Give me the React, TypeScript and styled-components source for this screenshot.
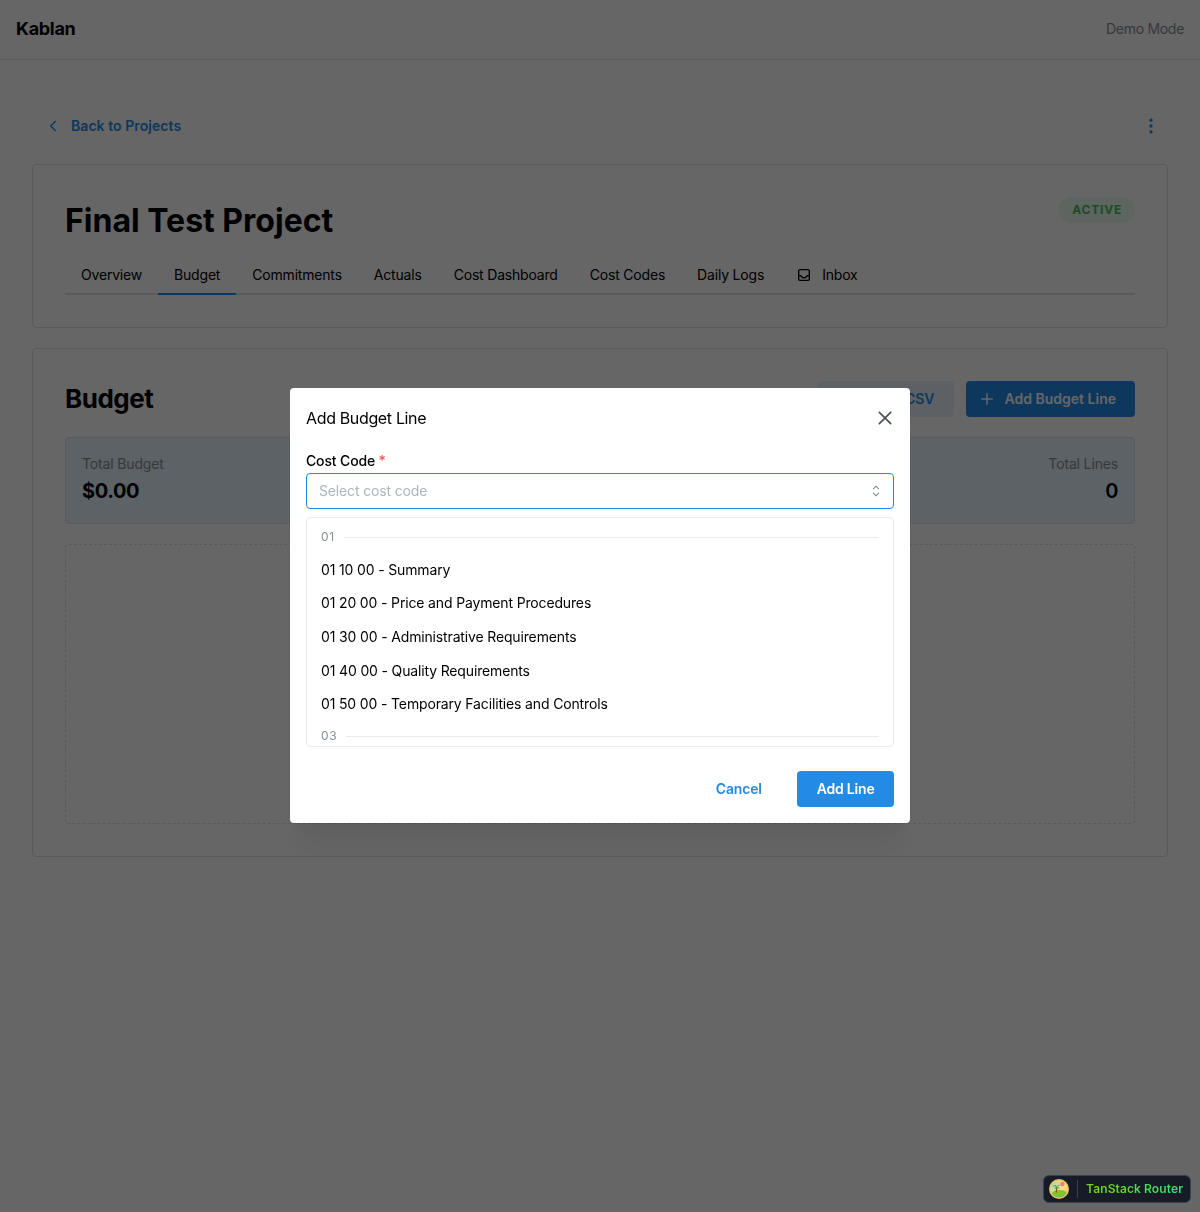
import styled, { createGlobalStyle } from "styled-components";
import { TbChevronLeft, TbDotsVertical, TbInbox, TbPlus, TbUpload } from "react-icons/tb";

const GlobalStyle = createGlobalStyle`
  * { box-sizing: border-box; }
  html, body { margin: 0; padding: 0; background: #fff; }
  body {
    font-family: Inter, "Liberation Sans", sans-serif;
    font-size: 14px;
    line-height: 1.55;
    letter-spacing: -0.15px;
    color: #000;
  }
`;

const Shell = styled.div`
  min-height: 1212px;
`;

const TopBar = styled.header`
  height: 60px;
  padding: 0 16px 1px;
  display: flex;
  align-items: center;
  justify-content: space-between;
  border-bottom: 1px solid #dee2e6;
`;

const Brand = styled.div`
  font-size: 18px;
  font-weight: 700;
  letter-spacing: -0.3px;
`;

const DemoTag = styled.div`
  color: #868e96;
  letter-spacing: -0.3px;
`;

const Main = styled.main`
  padding: 48px 32px;
  display: flex;
  flex-direction: column;
  gap: 20px;
`;

const BackRow = styled.div`
  display: flex;
  align-items: center;
  justify-content: space-between;
`;

const Button = styled.button<{ $variant: "filled" | "light" | "subtle"; $icon?: boolean }>`
  height: 36px;
  padding: 0 ${(p) => (p.$icon ? "19px 0 12px" : "19.5px")};
  display: inline-flex;
  align-items: center;
  gap: 9px;
  border: 0;
  border-radius: 4px;
  font: inherit;
  font-weight: 600;
  letter-spacing: ${(p) => (p.$icon ? "0" : "-0.2px")};
  color: ${(p) => (p.$variant === "filled" ? "#fff" : "#228be6")};
  background: ${(p) =>
    p.$variant === "filled"
      ? "#228be6"
      : p.$variant === "light"
        ? "rgba(34, 139, 230, 0.1)"
        : "transparent"};
`;

const BackButton = styled(Button)`
  letter-spacing: 0.06px;
`;

const IconButton = styled.button`
  width: 28px;
  height: 28px;
  padding: 0;
  display: inline-flex;
  align-items: center;
  justify-content: center;
  border: 0;
  background: transparent;
  color: #228be6;
  margin-right: 3px;
`;

const Card = styled.section`
  border: 1px solid #dee2e6;
  border-radius: 4px;
  padding: 32px;
`;

const TitleRow = styled.div`
  display: flex;
  align-items: flex-start;
  justify-content: space-between;
  margin-bottom: 12px;
`;

const Title = styled.h1`
  margin: 2px 0 0;
  font-size: 32px;
  font-weight: 700;
  line-height: 44px;
  letter-spacing: 0;
`;

const Badge = styled.span`
  height: 26px;
  padding: 1px 13px 0;
  display: inline-flex;
  align-items: center;
  border-radius: 13px;
  font-size: 12px;
  font-weight: 700;
  letter-spacing: 0.8px;
  color: #40c057;
  background: rgba(64, 192, 87, 0.1);
`;

const TabList = styled.nav`
  display: flex;
  border-bottom: 2px solid #dee2e6;
`;

const Tab = styled.a<{ $active?: boolean }>`
  height: 40px;
  padding: 2px 16px 0;
  margin-bottom: -2px;
  display: inline-flex;
  align-items: center;
  gap: 10px;
  letter-spacing: -0.19px;
  border-bottom: 2px solid ${(p) => (p.$active ? "#228be6" : "transparent")};
`;

const SectionHead = styled.div`
  display: flex;
  align-items: center;
  justify-content: space-between;
  margin-bottom: 20px;
`;

const SectionTitle = styled.h2`
  margin: 0;
  font-size: 26px;
  font-weight: 700;
  line-height: 36px;
  letter-spacing: -0.5px;
`;

const Actions = styled.div`
  display: flex;
  gap: 12px;
`;

const StatsBox = styled.div`
  display: flex;
  justify-content: space-between;
  padding: 15px 16px 16px;
  margin-bottom: 20px;
  border: 1px solid #dee2e6;
  border-radius: 4px;
  background: #e7f5ff;
`;

const Stat = styled.div<{ $right?: boolean }>`
  text-align: ${(p) => (p.$right ? "right" : "left")};
`;

const StatLabel = styled.div`
  color: #868e96;
`;

const StatValue = styled.div<{ $medium?: boolean }>`
  margin-top: 1px;
  font-size: 20px;
  font-weight: ${(p) => (p.$medium ? 600 : 700)};
  letter-spacing: -0.4px;
`;

const EmptyBox = styled.div`
  height: 280px;
  border: 1px dashed #dee2e6;
  border-radius: 4px;
`;

const Overlay = styled.div`
  position: fixed;
  inset: 0;
  padding-bottom: 1px;
  display: flex;
  align-items: center;
  justify-content: center;
  background: rgba(0, 0, 0, 0.6);
`;

const Modal = styled.div`
  width: 620px;
  padding: 0 16px 16px;
  border-radius: 4px;
  background: #fff;
  box-shadow: 0 1px 3px rgba(0, 0, 0, 0.05), 0 36px 28px -7px rgba(0, 0, 0, 0.05),
    0 17px 17px -7px rgba(0, 0, 0, 0.04);
`;

const ModalHead = styled.div`
  height: 60px;
  display: flex;
  align-items: center;
  justify-content: space-between;
`;

const ModalTitle = styled.div`
  font-size: 16px;
  letter-spacing: -0.35px;
`;

const CloseButton = styled.button`
  width: 28px;
  height: 28px;
  padding: 0;
  margin-right: -5px;
  display: inline-flex;
  align-items: center;
  justify-content: center;
  border: 0;
  background: transparent;
  color: #495057;
`;

const Label = styled.label`
  display: block;
  font-weight: 500;
  margin: 2.3px 0 1px;
`;

const Required = styled.span`
  color: #fa5252;
`;

const SelectInput = styled.div`
  height: 36px;
  padding: 0 8px 0 12px;
  display: flex;
  align-items: center;
  justify-content: space-between;
  border: 1px solid #228be6;
  border-radius: 4px;
  color: #adb5bd;
  svg { color: #868e96; }
`;

const Dropdown = styled.div`
  height: 230px;
  margin-top: 8px;
  padding: 4px;
  overflow: hidden;
  border: 1px solid #e9ecef;
  border-radius: 4px;
`;

const GroupLabel = styled.div`
  display: flex;
  align-items: center;
  gap: 9px;
  padding: 6px 10px;
  font-size: 12px;
  letter-spacing: 0.6px;
  color: #868e96;
  &::after {
    content: "";
    flex: 1;
    height: 1px;
    background: #e9ecef;
  }
`;

const Option = styled.div`
  padding: 6px 10px;
`;

const ModalFoot = styled.div`
  margin-top: 24px;
  display: flex;
  justify-content: flex-end;
  gap: 16px;
`;

const RouterTag = styled.div`
  position: fixed;
  right: 9px;
  bottom: 9px;
  height: 28px;
  padding: 0 7px 0 5px;
  display: flex;
  align-items: center;
  border: 1px solid #394156;
  border-radius: 6px;
  background: #161b26;
`;

const RouterLogo = styled.svg`
  width: 20px;
  height: 20px;
`;

const RouterDivider = styled.span`
  width: 1px;
  height: 18px;
  margin: 0 8px;
  background: #394156;
`;

const RouterName = styled.span`
  font-size: 12px;
  font-weight: 600;
  letter-spacing: 0.1px;
  background: linear-gradient(to right, #7ad50f, #2ee57e);
  -webkit-background-clip: text;
  background-clip: text;
  color: transparent;
`;

const tabs = ["Overview", "Budget", "Commitments", "Actuals", "Cost Dashboard", "Cost Codes", "Daily Logs"];

const firstGroup = [
  "01 10 00 - Summary",
  "01 20 00 - Price and Payment Procedures",
  "01 30 00 - Administrative Requirements",
  "01 40 00 - Quality Requirements",
  "01 50 00 - Temporary Facilities and Controls",
];

const App = () => {
  return (
    <Shell>
      <GlobalStyle />
      <TopBar>
        <Brand>Kablan</Brand>
        <DemoTag>Demo Mode</DemoTag>
      </TopBar>
      <Main>
        <BackRow>
          <BackButton $variant="subtle" $icon>
            <TbChevronLeft size={18} />
            Back to Projects
          </BackButton>
          <IconButton>
            <TbDotsVertical size={20} />
          </IconButton>
        </BackRow>
        <Card>
          <TitleRow>
            <Title>Final Test Project</Title>
            <Badge>ACTIVE</Badge>
          </TitleRow>
          <TabList>
            {tabs.map((t) => (
              <Tab key={t} $active={t === "Budget"}>
                {t}
              </Tab>
            ))}
            <Tab>
              <TbInbox size={16} />
              Inbox
            </Tab>
          </TabList>
        </Card>
        <Card>
          <SectionHead>
            <SectionTitle>Budget</SectionTitle>
            <Actions>
              <Button $variant="light" $icon>
                <TbUpload size={18} />
                Import CSV
              </Button>
              <Button $variant="filled" $icon>
                <TbPlus size={18} />
                Add Budget Line
              </Button>
            </Actions>
          </SectionHead>
          <StatsBox>
            <Stat>
              <StatLabel>Total Budget</StatLabel>
              <StatValue>$0.00</StatValue>
            </Stat>
            <Stat $right>
              <StatLabel>Total Lines</StatLabel>
              <StatValue $medium>0</StatValue>
            </Stat>
          </StatsBox>
          <EmptyBox />
        </Card>
      </Main>

      <Overlay>
        <Modal>
          <ModalHead>
            <ModalTitle>Add Budget Line</ModalTitle>
            <CloseButton>
              <svg width="22" height="22" viewBox="0 0 15 15" fill="currentColor">
                <path
                  fillRule="evenodd"
                  clipRule="evenodd"
                  d="M11.7816 4.03157C12.0062 3.80702 12.0062 3.44295 11.7816 3.2184C11.5571 2.99385 11.193 2.99385 10.9685 3.2184L7.50005 6.68682L4.03164 3.2184C3.80708 2.99385 3.44301 2.99385 3.21846 3.2184C2.99391 3.44295 2.99391 3.80702 3.21846 4.03157L6.68688 7.49999L3.21846 10.9684C2.99391 11.193 2.99391 11.557 3.21846 11.7816C3.44301 12.0061 3.80708 12.0061 4.03164 11.7816L7.50005 8.31316L10.9685 11.7816C11.193 12.0061 11.5571 12.0061 11.7816 11.7816C12.0062 11.557 12.0062 11.193 11.7816 10.9684L8.31322 7.49999L11.7816 4.03157Z"
                />
              </svg>
            </CloseButton>
          </ModalHead>
          <Label>
            Cost Code <Required>*</Required>
          </Label>
          <SelectInput>
            Select cost code
            <svg width="18" height="18" viewBox="0 0 15 15" fill="currentColor">
              <path
                fillRule="evenodd"
                clipRule="evenodd"
                d="M4.93179 5.43179C4.75605 5.60753 4.75605 5.89245 4.93179 6.06819C5.10753 6.24392 5.39245 6.24392 5.56819 6.06819L7.49999 4.13638L9.43179 6.06819C9.60753 6.24392 9.89245 6.24392 10.0682 6.06819C10.2439 5.89245 10.2439 5.60753 10.0682 5.43179L7.81819 3.18179C7.73379 3.0974 7.61933 3.04999 7.49999 3.04999C7.38064 3.04999 7.26618 3.0974 7.18179 3.18179L4.93179 5.43179ZM10.0682 9.56819C10.2439 9.39245 10.2439 9.10753 10.0682 8.93179C9.89245 8.75606 9.60753 8.75606 9.43179 8.93179L7.49999 10.8636L5.56819 8.93179C5.39245 8.75606 5.10753 8.75606 4.93179 8.93179C4.75605 9.10753 4.75605 9.39245 4.93179 9.56819L7.18179 11.8182C7.26618 11.9026 7.38064 11.95 7.49999 11.95C7.61933 11.95 7.73379 11.9026 7.81819 11.8182L10.0682 9.56819Z"
              />
            </svg>
          </SelectInput>
          <Dropdown>
            <GroupLabel>01</GroupLabel>
            {firstGroup.map((o) => (
              <Option key={o}>{o}</Option>
            ))}
            <GroupLabel>03</GroupLabel>
          </Dropdown>
          <ModalFoot>
            <Button $variant="subtle">Cancel</Button>
            <Button $variant="filled">Add Line</Button>
          </ModalFoot>
        </Modal>
      </Overlay>

      <RouterTag>
        <RouterLogo viewBox="0 0 20 20">
          <defs>
            <linearGradient id="sky" x1="0" y1="0" x2="1" y2="1">
              <stop offset="0" stopColor="#7fd6c2" />
              <stop offset="0.55" stopColor="#fbe08c" />
              <stop offset="1" stopColor="#f8a66b" />
            </linearGradient>
            <clipPath id="disc">
              <circle cx="10" cy="10" r="8.6" />
            </clipPath>
          </defs>
          <circle cx="10" cy="10" r="10" fill="#f7c35f" />
          <g clipPath="url(#disc)">
            <rect width="20" height="20" fill="url(#sky)" />
            <circle cx="13.5" cy="5" r="2.2" fill="#f77f6a" />
            <rect y="14" width="20" height="6" fill="#35b5d6" />
            <ellipse cx="10.5" cy="14.5" rx="7.5" ry="3.4" fill="#7cc62f" />
            <path d="M7.2 13.500c.1-2.200.4-4 1-5.800" stroke="#8a4f1d" strokeWidth="1.2" fill="none" />
            <path d="M8.200 7.700C7 6 4.800 5.800 3.600 7.500c1.500-.5 3-.3 4.600.2zM8.200 7.700C8.500 5.700 10.600 5 12.300 6.300c-1.500 0-2.800.4-4.100 1.400zM8.200 7.700c-1.400.2-2.600 1.200-2.900 2.800 1-.9 1.900-1.800 2.900-2.800zM8.200 7.700c1.300.2 2.300 1.100 2.600 2.500-1-.8-1.700-1.700-2.600-2.500z" fill="#2f9a45" />
          </g>
        </RouterLogo>
        <RouterDivider />
        <RouterName>TanStack Router</RouterName>
      </RouterTag>
    </Shell>
  );
};

export default App;
